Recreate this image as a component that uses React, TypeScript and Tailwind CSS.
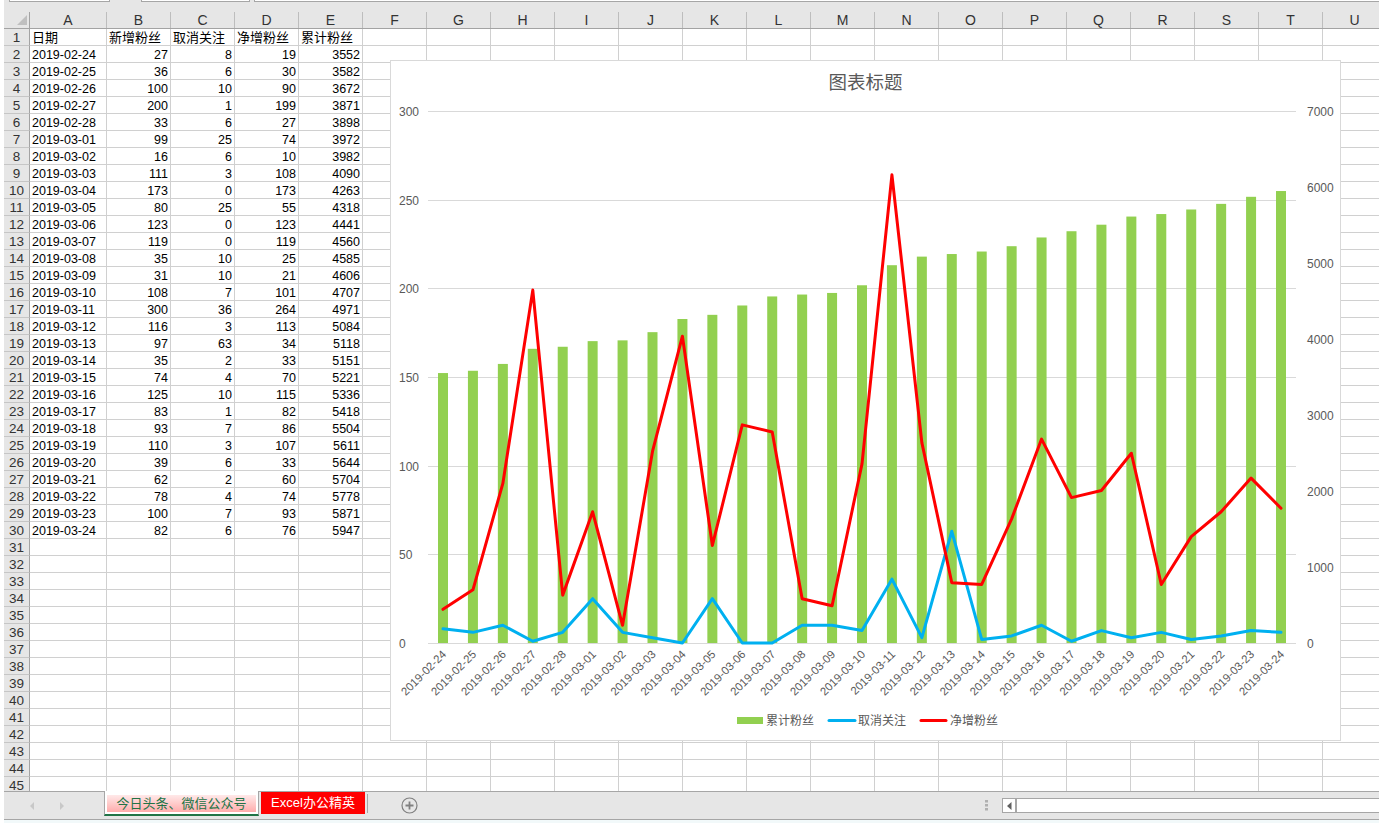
import React from 'react'

const letters = ['A', 'B', 'C', 'D', 'E', 'F', 'G', 'H', 'I', 'J', 'K', 'L', 'M', 'N', 'O', 'P', 'Q', 'R', 'S', 'T', 'U']

// date, new, cancelled, net, total
const data: [string, number, number, number, number][] = [
  ['2019-02-24', 27, 8, 19, 3552],
  ['2019-02-25', 36, 6, 30, 3582],
  ['2019-02-26', 100, 10, 90, 3672],
  ['2019-02-27', 200, 1, 199, 3871],
  ['2019-02-28', 33, 6, 27, 3898],
  ['2019-03-01', 99, 25, 74, 3972],
  ['2019-03-02', 16, 6, 10, 3982],
  ['2019-03-03', 111, 3, 108, 4090],
  ['2019-03-04', 173, 0, 173, 4263],
  ['2019-03-05', 80, 25, 55, 4318],
  ['2019-03-06', 123, 0, 123, 4441],
  ['2019-03-07', 119, 0, 119, 4560],
  ['2019-03-08', 35, 10, 25, 4585],
  ['2019-03-09', 31, 10, 21, 4606],
  ['2019-03-10', 108, 7, 101, 4707],
  ['2019-03-11', 300, 36, 264, 4971],
  ['2019-03-12', 116, 3, 113, 5084],
  ['2019-03-13', 97, 63, 34, 5118],
  ['2019-03-14', 35, 2, 33, 5151],
  ['2019-03-15', 74, 4, 70, 5221],
  ['2019-03-16', 125, 10, 115, 5336],
  ['2019-03-17', 83, 1, 82, 5418],
  ['2019-03-18', 93, 7, 86, 5504],
  ['2019-03-19', 110, 3, 107, 5611],
  ['2019-03-20', 39, 6, 33, 5644],
  ['2019-03-21', 62, 2, 60, 5704],
  ['2019-03-22', 78, 4, 74, 5778],
  ['2019-03-23', 100, 7, 93, 5871],
  ['2019-03-24', 82, 6, 76, 5947],
]

const titles = ['日期', '新增粉丝', '取消关注', '净增粉丝', '累计粉丝']

function cellsFor(row: number): (string | number)[] {
  if (row === 1) return titles
  const d = data[row - 2]
  return d ? d : []
}

function SheetRow({ row }: { row: number }) {
  const cells = cellsFor(row)
  return (
    <div className="flex h-[17px] shrink-0 leading-[18px]">
      <div className="w-[26px] shrink-0 border-r border-b border-r-[#a3a3a3] border-b-[#c6c6c6] bg-[#e6e6e6] text-center text-[13.5px] text-[#333333]">
        {row}
      </div>
      {letters.map((l, i) => {
        const v = cells[i]
        const isTitle = row === 1
        return (
          <div
            key={l}
            className={`shrink-0 overflow-visible whitespace-nowrap border-r border-b border-[#d0d0d0] text-[12.5px] text-black ${
              i === 0 ? 'w-[77px] pl-[2px]' : 'w-[64px]'
            } ${typeof v === 'number' ? 'pr-[2px] text-right' : ''} ${isTitle ? 'pl-[2px] text-[13px]' : ''}`}
          >
            {v}
          </div>
        )
      })}
    </div>
  )
}

const yPrimary = (v: number) => 643 - (v * 532) / 300
const ySecondary = (v: number) => 643 - (v * 532) / 7000
const xAt = (i: number) => 443 + (i * 838) / 28

function Chart() {
  const blue = data.map((d, i) => `${xAt(i)},${yPrimary(d[2])}`).join(' ')
  const red = data.map((d, i) => `${xAt(i)},${yPrimary(d[3])}`).join(' ')
  return (
    <div className="absolute left-[390px] top-[60px] h-[681px] w-[951px] border border-[#d9d9d9] bg-white">
      <svg viewBox="391 61 949 679" className="block h-[679px] w-[949px]">
        <text x="865.5" y="89" textAnchor="middle" className="fill-[#595959] text-[18.5px]">
          图表标题
        </text>
        {[0, 50, 100, 150, 200, 250, 300].map((v) => (
          <g key={v}>
            <line x1="428" x2="1296" y1={Math.round(yPrimary(v)) + 0.5} y2={Math.round(yPrimary(v)) + 0.5} stroke="#d9d9d9" />
            <text x="399" y={yPrimary(v) + 5} className="fill-[#595959] text-[12px]">
              {v}
            </text>
          </g>
        ))}
        {[0, 1000, 2000, 3000, 4000, 5000, 6000, 7000].map((v) => (
          <text key={v} x="1307" y={ySecondary(v) + 4.5} className="fill-[#595959] text-[12px]">
            {v}
          </text>
        ))}
        {data.map((d, i) => (
          <rect key={d[0]} x={xAt(i) - 5} y={ySecondary(d[4])} width="10" height={643 - ySecondary(d[4])} fill="#92d050" />
        ))}
        <polyline points={blue} fill="none" stroke="#00b0f0" strokeWidth="3" strokeLinejoin="round" strokeLinecap="round" />
        <polyline points={red} fill="none" stroke="#ff0000" strokeWidth="3" strokeLinejoin="round" strokeLinecap="round" />
        {data.map((d, i) => (
          <text
            key={d[0]}
            textAnchor="end"
            transform={`translate(${xAt(i) + 4} 655) rotate(-45)`}
            className="fill-[#595959] text-[11.4px]"
          >
            {d[0]}
          </text>
        ))}
        <rect x="737" y="717" width="26" height="7" fill="#92d050" />
        <text x="766" y="725" className="fill-[#595959] text-[12px]">累计粉丝</text>
        <line x1="829" x2="855" y1="720.5" y2="720.5" stroke="#00b0f0" strokeWidth="3" strokeLinecap="round" />
        <text x="858" y="725" className="fill-[#595959] text-[12px]">取消关注</text>
        <line x1="921" x2="946" y1="720.5" y2="720.5" stroke="#ff0000" strokeWidth="3" strokeLinecap="round" />
        <text x="950" y="725" className="fill-[#595959] text-[12px]">净增粉丝</text>
      </svg>
    </div>
  )
}

function TabBar() {
  return (
    <div className="flex h-[29px] shrink-0 items-start border-y border-y-[#a6a6a6] bg-[#e6e6e6]">
      <div className="flex h-full w-[100px] shrink-0 items-center gap-[24px] pl-[25px]">
        <svg width="6" height="10" viewBox="0 0 6 10"><path d="M5 1 1 5l4 4z" fill="#c8c8c8" /></svg>
        <svg width="6" height="10" viewBox="0 0 6 10"><path d="M1 1l4 4-4 4z" fill="#c8c8c8" /></svg>
      </div>
      <div className="-mt-px h-[25px] w-[155px] shrink-0 border-x border-b-2 border-x-[#a6a6a6] border-b-[#217346] bg-white px-[2px] pt-[4px]">
        <div className="h-[17px] bg-gradient-to-b from-[#ffe9e9] to-[#ffacac] text-center text-[13px] leading-[17px] text-[#217346]">
          今日头条、微信公众号
        </div>
      </div>
      <div className="ml-[2px] h-[22px] w-[104px] shrink-0 bg-[#ff0000] text-center text-[13px] leading-[21px] text-white">
        Excel办公精英
      </div>
      <div className="ml-[2px] mt-[2px] h-[19px] w-px shrink-0 bg-[#a6a6a6]" />
      <div className="ml-[33px] flex h-full shrink-0 items-center pb-[1px]">
        <svg width="17" height="17" viewBox="0 0 17 17" fill="none" stroke="#808080">
          <circle cx="8.5" cy="8.5" r="7.5" strokeWidth="1.2" />
          <path d="M8.5 4.5v8M4.5 8.5h8" strokeWidth="1.8" />
        </svg>
      </div>
      <div className="ml-[567px] flex h-full shrink-0 items-center">
        <svg width="3" height="11" viewBox="0 0 3 11"><path d="M0 0h3v2.500H0zM0 4h3v2.500H0zM0 8h3v2.500H0z" fill="#b0b0b0" /></svg>
      </div>
      <div className="ml-[14px] mt-[6px] flex h-[15px] min-w-0 flex-1 border-y border-l border-[#a6a6a6] bg-white">
        <div className="flex w-[14px] shrink-0 items-center justify-center border-r-2 border-r-[#a6a6a6]">
          <svg width="5" height="8" viewBox="0 0 5 8"><path d="M4.500 0 0 4l4.500 4z" fill="#606060" /></svg>
        </div>
      </div>
    </div>
  )
}

export default function App() {
  const rows = Array.from({ length: 45 }, (_, i) => i + 1)
  return (
    <div className="relative flex h-[823px] w-[1379px] flex-col overflow-hidden bg-white pl-[4px] font-['Liberation_Sans','Noto_Sans_CJK_SC',sans-serif]">
      {/* formula bar remnant */}
      <div className="h-[12px] shrink-0 bg-[#e6e6e6]">
        <div className="flex h-[2px] pl-[5px]">
          <div className="w-[101px] border-b border-x border-[#a6a6a6] bg-white" />
          <div className="ml-[31px] w-[109px] border-b border-x border-[#a6a6a6] bg-white" />
          <div className="ml-[4px] flex-1 border-b border-l border-[#a6a6a6] bg-white" />
        </div>
      </div>

      {/* column headers */}
      <div className="flex h-[17px] shrink-0 border-b border-b-[#a3a3a3] bg-[#e6e6e6] text-center text-[14px] leading-[16px] text-[#333333]">
        <div className="flex w-[26px] shrink-0 justify-end border-r border-r-[#a3a3a3] pr-[2px] pt-[3px]">
          <svg width="10" height="10" viewBox="0 0 10 10"><path d="M10 0v10H0z" fill="#bfbfbf" /></svg>
        </div>
        {letters.map((l, i) => (
          <div key={l} className={`shrink-0 border-r border-r-[#bdbdbd] ${i === 0 ? 'w-[77px]' : 'w-[64px]'}`}>
            {l}
          </div>
        ))}
      </div>

      {/* sheet */}
      <div className="h-[762px] shrink-0 overflow-hidden">
        {rows.map((r) => (
          <SheetRow key={r} row={r} />
        ))}
      </div>

      <TabBar />
      <div className="h-[3px] shrink-0 bg-[#f2f9fa]" />

      <Chart />
    </div>
  )
}
